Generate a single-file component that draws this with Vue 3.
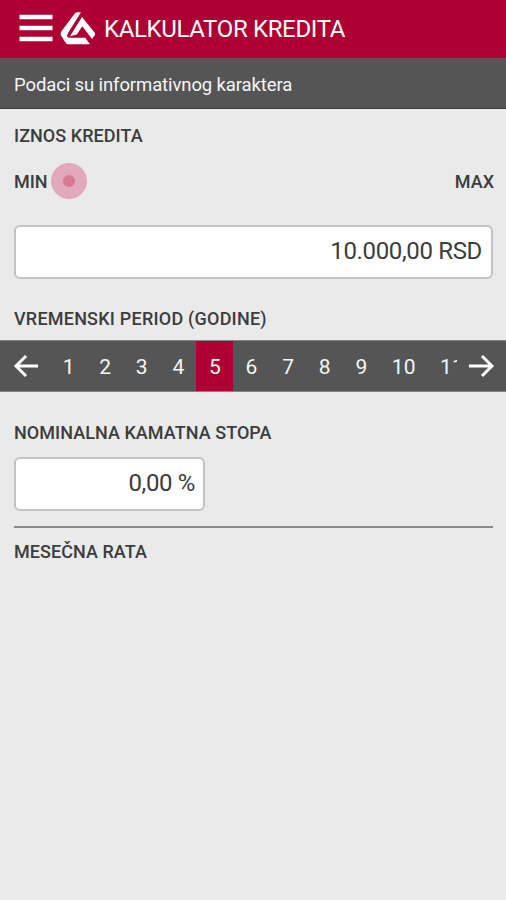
<template>
  <main class="screen">
    <header class="toolbar">
      <button class="icon-button" aria-label="Meni">
        <svg width="34" height="30" viewBox="0 0 34 30">
          <path d="M0.5 3h33M0.5 14h33M0.5 25h33" stroke="#fff" stroke-width="4.4" />
        </svg>
      </button>
      <svg class="logo" width="36" height="34" viewBox="0 0 36 34">
        <path d="M14.8 1.6Q15.8 0.2 17.6 0.2H21L8.2 20.8 6.8 24.2 9 25.8H25.2L30 32.3H8.2Q6.5 32.3 5.6 30.8L1 23.5Q0 21.7 1.1 19.8Z" />
        <path d="M22 5L34.6 20.6Q35.6 21.9 34.7 23.3L32 27 22.3 14.2 16.8 22.6 10 24.2Z" />
      </svg>
      <h1>KALKULATOR KREDITA</h1>
    </header>
    <p class="notice">Podaci su informativnog karaktera</p>

    <section class="amount">
      <h2>IZNOS KREDITA</h2>
      <div class="slider">
        <span>MIN</span>
        <span class="thumb"></span>
        <span class="max">MAX</span>
      </div>
      <div class="field">10.000,00 RSD</div>
      <h2 class="period-title">VREMENSKI PERIOD (GODINE)</h2>
    </section>

    <nav class="years">
      <button class="icon-button arrow" aria-label="Prethodna" @click="step(-1)">
        <svg width="25" height="24" viewBox="0 0 25 24">
          <path d="M25 12H3M13 2L3 12l10 10" />
        </svg>
      </button>
      <div class="year-list">
        <span
          v-for="year in years"
          :key="year"
          class="year"
          :class="{ active: year === selected }"
          @click="selected = year"
        >{{ year }}</span>
      </div>
      <button class="icon-button arrow" aria-label="Sledeća" @click="step(1)">
        <svg width="25" height="24" viewBox="0 0 25 24">
          <path d="M0 12h23M13 2l10 10-10 10" />
        </svg>
      </button>
    </nav>

    <section class="rate">
      <h2 class="rate-title">NOMINALNA KAMATNA STOPA</h2>
      <div class="field small">0,00 %</div>
      <hr />
      <h2 class="result-title">MESEČNA RATA</h2>
    </section>
  </main>
</template>

<script setup>
import { ref } from 'vue';

const years = [1, 2, 3, 4, 5, 6, 7, 8, 9, 10, 11];
const selected = ref(5);

// move the selected year, staying inside the list
function step(delta) {
  const next = selected.value + delta;
  if (years.includes(next)) selected.value = next;
}
</script>

<style>
body {
  background: #eaeaea;
}
</style>

<style scoped>
.screen {
  box-sizing: border-box;
  height: 900px;
  overflow: hidden;
  background: #eaeaea;
  color: #3c3c3c;
  font-family: Roboto, sans-serif;
}

.icon-button {
  display: flex;
  padding: 0;
  border: 0;
  background: none;
}

.toolbar {
  display: flex;
  align-items: center;
  box-sizing: border-box;
  height: 58px;
  padding: 0 19px;
  background: #ae0032;
  color: #fff;
}

.logo {
  margin: 0 8px 1px 7px;
  fill: #fff;
}

h1 {
  margin: 0;
  font-size: 24px;
  font-weight: 400;
  line-height: 58px;
  letter-spacing: -0.35px;
  white-space: nowrap;
}

.notice {
  box-sizing: border-box;
  height: 51px;
  margin: 0;
  padding: 0 14px;
  border-top: 1px solid #6b4a50;
  border-bottom: 1px solid #3c3c3c;
  background: #555;
  color: #f5f5f5;
  font-size: 18.5px;
  line-height: 53px;
  letter-spacing: -0.11px;
}

.amount,
.rate {
  padding: 0 12px 0 14px;
}

h2 {
  margin: 0;
  font-size: 18px;
  font-weight: 500;
  line-height: 24px;
  letter-spacing: 0.05px;
}

.amount {
  padding-top: 15px;
}

.slider {
  display: flex;
  align-items: center;
  height: 38px;
  margin-top: 14px;
  font-size: 18px;
  font-weight: 500;
}

.thumb {
  box-sizing: border-box;
  width: 36px;
  height: 36px;
  margin-left: 3px;
  border: 12px solid #e2a9bc;
  border-radius: 50%;
  background: #d97796;
}

.max {
  margin-left: auto;
}

.field {
  box-sizing: border-box;
  height: 54px;
  margin: 25px 1px 0 0;
  padding-right: 9px;
  border: 2px solid #c3c3c3;
  border-radius: 6px;
  background: #fff;
  font-size: 24px;
  line-height: 48px;
  letter-spacing: -0.35px;
  text-align: right;
}

.period-title {
  margin-top: 28px;
  letter-spacing: 0.22px;
}

.years {
  display: flex;
  align-items: center;
  box-sizing: border-box;
  height: 52px;
  margin-top: 9px;
  padding: 0 12px 0 13px;
  border-top: 1px solid #858585;
  border-bottom: 1px solid #858585;
  background: #555;
  color: #f5f5f5;
}

.arrow path {
  fill: none;
  stroke: #fff;
  stroke-width: 3;
}

.year-list {
  display: flex;
  width: 407px;
  height: 50px;
  margin: 0 12px;
  overflow: hidden;
}

.year {
  flex: none;
  box-sizing: border-box;
  min-width: 36.6px;
  padding: 0 11.6px 0 12.4px;
  font-size: 21px;
  line-height: 53px;
  letter-spacing: 0.3px;
  text-align: center;
}

.active {
  background: #ae0032;
}

.rate-title {
  padding-top: 29px;
}

.small {
  width: 191px;
  margin-top: 12px;
  padding-right: 8px;
}

hr {
  height: 2px;
  margin: 15px 1px 0 0;
  border: 0;
  background: #8c8c8c;
}

.result-title {
  margin-top: 12px;
}
</style>
